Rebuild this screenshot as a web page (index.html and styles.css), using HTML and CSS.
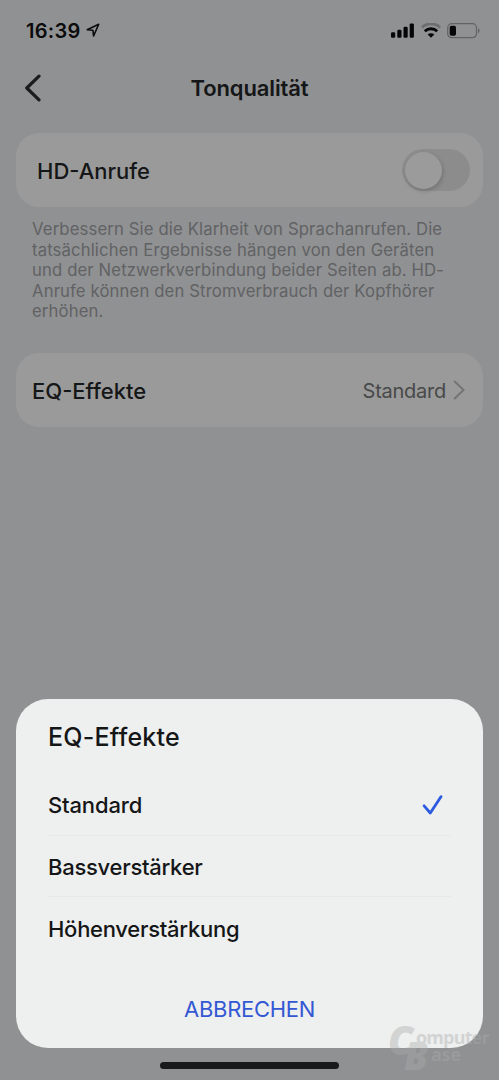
FILE: index.html
```html
<!DOCTYPE html>
<html lang="de">
<head>
<meta charset="utf-8">
<title>Tonqualität</title>
<link rel="stylesheet" href="styles.css">
</head>
<body>
<div class="screen">
  <header class="status">
    <div class="status-left">
      <span class="clock">16:39</span>
      <svg class="location" width="14" height="15" viewBox="0 0 14 15"><path d="M1.2 6.7 12.7 1.3 7.6 13 6.9 7.2Z" fill="none" stroke="#0b0b0c" stroke-width="1.6" stroke-linejoin="round"/></svg>
    </div>
    <div class="status-right">
      <svg width="24" height="16" viewBox="0 0 24 16" fill="#060607"><rect x="0" y="9.3" width="4.2" height="5.4" rx="1.2"/><rect x="6.3" y="6.8" width="4.2" height="7.9" rx="1.2"/><rect x="12.5" y="3.8" width="4.2" height="10.9" rx="1.2"/><rect x="18.7" y="0.4" width="4.2" height="14.3" rx="1.2"/></svg>
      <svg width="20" height="16" viewBox="0 0 20 16" fill="none"><path d="M.9 4.5A13 13 0 0 1 19.1 4.5" stroke="#6d6e70" stroke-width="2.7"/><path d="M3.8 8.3A8.8 8.8 0 0 1 16.2 8.3" stroke="#060607" stroke-width="2.8"/><path d="M6.7 11.6A4.7 4.7 0 0 1 13.3 11.6L10 14.8Z" fill="#060607"/></svg>
      <svg width="34" height="16" viewBox="0 0 34 16"><rect x="0.7" y="0.7" width="28.8" height="14" rx="4" fill="none" stroke="#626365" stroke-width="1.2"/><rect x="2.7" y="2.7" width="6.3" height="10" rx="1.8" fill="#060607"/><path d="M31 5.2c2 .8 2 4.2 0 5Z" fill="#626365"/></svg>
    </div>
  </header>
  <nav class="nav">
    <svg class="back" width="18" height="28" viewBox="0 0 18 28"><path d="M15 2.2 2.8 14 15 25.8" fill="none" stroke="#1a1b1c" stroke-width="3.2" stroke-linecap="round" stroke-linejoin="round"/></svg>
    <h1 class="title">Tonqualität</h1>
  </nav>
  <main class="settings">
    <section class="card card-call">
      <span class="label label-call">HD-Anrufe</span>
      <span class="switch"><span class="knob"></span></span>
    </section>
    <p class="hint">Verbessern Sie die Klarheit von Sprachanrufen. Die<br>tatsächlichen Ergebnisse hängen von den Geräten<br>und der Netzwerkverbindung beider Seiten ab. HD-<br>Anrufe können den Stromverbrauch der Kopfhörer<br>erhöhen.</p>
    <section class="card card-eq">
      <span class="label label-eq">EQ-Effekte</span>
      <span class="value">Standard</span>
      <svg width="13" height="20" viewBox="0 0 13 20"><path d="M1.7 1.5 10.6 10 1.7 18.5" fill="none" stroke="#747475" stroke-width="2" stroke-linecap="round" stroke-linejoin="round"/></svg>
    </section>
  </main>
  <section class="sheet">
    <h2 class="sheet-title">EQ-Effekte</h2>
    <ul class="options">
      <li class="option"><span class="opt-a">Standard</span><svg class="check" width="22" height="22" viewBox="0 0 22 22"><path d="M2.1 11.8 8.3 19 19.1 2.6" fill="none" stroke="#2c5ae0" stroke-width="2.8" stroke-linecap="round" stroke-linejoin="round"/></svg></li>
      <li class="option"><span class="opt-b">Bassverstärker</span></li>
      <li class="option"><span class="opt-c">Höhenverstärkung</span></li>
    </ul>
    <div class="cancel">ABBRECHEN</div>
  </section>
  <div class="home-bar"></div>
  <div class="watermark">
    <span class="wm-c">C</span><span class="wm-omputer">omputer</span>
    <span class="wm-b">B</span><span class="wm-ase">ase</span>
  </div>
</div>
</body>
</html>
```
FILE: styles.css
```css
* { box-sizing: border-box; }
body { margin: 0; }
.screen {
  position: relative;
  width: 499px;
  height: 1080px;
  overflow: hidden;
  display: flex;
  flex-direction: column;
  background: #909193;
  font-family: Inter, "Liberation Sans", sans-serif;
  color: #151617;
  white-space: nowrap;
}
.status {
  height: 60px;
  flex: none;
  display: flex;
  justify-content: space-between;
  align-items: flex-start;
  padding: 23px 18px 0 26px;
}
.status-left { display: flex; align-items: flex-start; gap: 5px; }
.clock { font-size: 20px; line-height: 16px; font-weight: 600; letter-spacing: .3px; color: #0b0b0c; }
.status-right { display: flex; gap: 6px; }
.nav {
  height: 73px;
  flex: none;
  display: grid;
  grid-template-columns: 60px 1fr 60px;
  padding-top: 14px;
}
.back { margin-left: 24px; }
.title { margin: 0; font-size: 22px; line-height: 28px; font-weight: 600; letter-spacing: -.12px; text-align: center; }
.settings { padding: 0 16px; flex: 1; }
.card {
  height: 74px;
  border-radius: 23px;
  background: #9a9a9a;
  display: flex;
  align-items: center;
}
.card-call { padding: 0 13px 0 21px; }
.card-eq { padding: 0 17px 0 16px; }
.label { font-size: 22px; font-weight: 500; margin-right: auto; padding-top: 2px; }
.switch {
  width: 68px;
  height: 42px;
  border-radius: 21px;
  background: #8c8c8c;
  padding: 2.5px;
}
.knob {
  display: block;
  width: 37px;
  height: 37px;
  border-radius: 50%;
  background: #9b9b9b;
  box-shadow: 1px 2px 4px rgba(0, 0, 0, .18);
}
.hint { margin: 12px 16px 31.5px; font-size: 16.7px; letter-spacing: .13px; line-height: 20.6px; color: #616264; height: 102.5px; }
.value { font-size: 20px; letter-spacing: -.25px; color: #484949; margin-right: 7px; padding-top: 1px; }
.sheet {
  width: 467px;
  height: 349px;
  flex: none;
  margin: 0 16px;
  padding: 20px 32px 0;
  border-radius: 32px;
  background: #eeefef;
}
.sheet-title { margin: 0; font-size: 25px; line-height: 36px; font-weight: 500; letter-spacing: .2px; }
.options { list-style: none; margin: 19px 0 0; padding: 0; }
.option {
  height: 61.5px;
  display: flex;
  align-items: center;
  justify-content: space-between;
  font-size: 22px;
  font-weight: 500;
  letter-spacing: -.27px;
  border-bottom: 1px solid #e8e9e9;
}
.option span { padding-top: 2px; }
.opt-a { letter-spacing: -.15px; }
.option:last-child { border-bottom: 0; }
.check { margin: 2px 7px 0 0; }
.cancel { margin-top: 35px; font-size: 22px; line-height: 30px; letter-spacing: -.3px; text-align: center; color: #3458d4; }
.home-bar { width: 179px; height: 7px; flex: none; margin: 14px auto 11px; border-radius: 4px; background: #191a1a; }
.watermark {
  position: absolute;
  left: 388px;
  top: 1022px;
  width: 111px;
  height: 58px;
  font-family: "Open Sans", sans-serif;
  font-weight: 700;
  color: #aaa;
  opacity: .4;
}
.watermark span { position: absolute; line-height: 1; }
.wm-c { left: 0; top: -2px; font-size: 40px; font-style: italic; font-weight: 800; }
.wm-omputer { left: 28px; top: 6px; font-size: 18px; letter-spacing: -.85px; }
.wm-b { left: 16px; top: 14px; font-size: 38px; font-style: italic; font-weight: 800; }
.wm-ase { left: 43px; top: 23px; font-size: 18px; letter-spacing: -.3px; }
```
